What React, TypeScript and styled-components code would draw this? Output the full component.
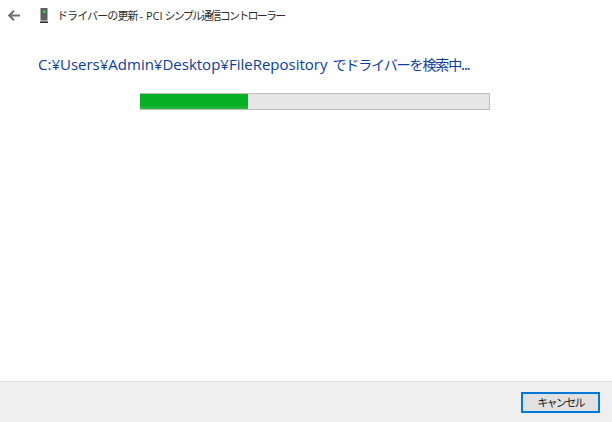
import * as React from "react";
import styled, { createGlobalStyle } from "styled-components";

const GlobalStyle = createGlobalStyle`
  html, body {
    margin: 0;
    padding: 0;
    background: #ffffff;
  }
  body {
    font-family: "Open Sans", "Noto Sans CJK JP", sans-serif;
  }
`;

const SWindow = styled.div`
  width: 612px;
  height: 422px;
  display: flex;
  flex-direction: column;
  overflow: hidden;
  background: #ffffff;
`;

const STitleBar = styled.div`
  height: 30px;
  display: flex;
  align-items: center;
  padding-left: 8px;
`;

const SBackIcon = styled.svg`
  width: 12px;
  height: 11px;
  margin-right: 20px;
`;

const SDeviceIcon = styled.svg`
  width: 8px;
  height: 15px;
  margin-right: 9px;
`;

const STitle = styled.span`
  font-family: "Noto Sans CJK JP", sans-serif;
  font-size: 11px;
  color: #2b2b2b;
  white-space: pre;
  margin-top: -1px;
`;

const STitleKana = styled.span<{ $spacing: number }>`
  letter-spacing: ${({ $spacing }) => $spacing}px;
`;

const STitleLatin = styled.span`
  font-family: "Open Sans", sans-serif;
  margin: 0 2px 0 2px;
`;

const SContent = styled.div`
  flex: 1;
  padding: 24px 0 0 38px;
  display: flex;
  flex-direction: column;
`;

const SHeading = styled.div`
  font-family: "Open Sans", sans-serif;
  font-size: 15px;
  line-height: 20px;
  color: #0a3ca4;
  white-space: nowrap;
`;

const SHeadingTail = styled.span`
  font-family: "Noto Sans CJK JP", sans-serif;
  font-size: 14px;
  letter-spacing: -1.1px;
  margin-left: 1px;
`;

const STrack = styled.div`
  box-sizing: border-box;
  width: 350px;
  height: 17px;
  margin: 19px 0 0 102px;
  background: #e6e6e6;
  border: 1px solid #bcbcbc;
  border-left: none;
`;

const SFill = styled.div`
  height: 100%;
  background: linear-gradient(to bottom, #06b025 0%, #06b025 75%, #2dbb47 100%);
`;

const SFooter = styled.div`
  box-sizing: border-box;
  height: 41px;
  display: flex;
  align-items: center;
  justify-content: flex-end;
  padding-right: 12px;
  background: #efefef;
  border-top: 1px solid #dfdfdf;
`;

const SButton = styled.button`
  box-sizing: border-box;
  width: 79px;
  height: 21px;
  padding: 0;
  font-family: "Noto Sans CJK JP", sans-serif;
  font-size: 11px;
  line-height: 15px;
  letter-spacing: -1.7px;
  color: #1a1a1a;
  background: #e1e1e1;
  border: 2px solid #0078d7;
`;

const App = () => {
  const progress = 108;

  return (
    <SWindow>
      <GlobalStyle />
      <STitleBar>
        <SBackIcon viewBox="0 0 12 11">
          <path d="M6 0.8 L1.2 5.5 L6 10.2 M1.2 5.5 H12" fill="none" stroke="#6f6f6f" strokeWidth="2" />
        </SBackIcon>
        <SDeviceIcon viewBox="0 0 8 15">
          <rect x="0.5" y="0" width="7" height="12" fill="#5f5f5f" />
          <rect x="0.5" y="12" width="7" height="1.5" fill="#a0a0a0" />
          <rect x="0" y="13.5" width="8" height="1.5" fill="#2f2f2f" />
          <rect x="3" y="2.5" width="2.5" height="2.5" fill="#22e04a" />
        </SDeviceIcon>
        <STitle>
          <STitleKana $spacing={-0.9}>ドライバーの更新</STitleKana>
          <STitleLatin>- PCI</STitleLatin>
          <STitleKana $spacing={-1.75}>シンプル通信コントローラー</STitleKana>
        </STitle>
      </STitleBar>
      <SContent>
        <SHeading>
          C:¥Users¥Admin¥Desktop¥FileRepository <SHeadingTail>でドライバーを検索中...</SHeadingTail>
        </SHeading>
        <STrack>
          <SFill style={{ width: progress }} />
        </STrack>
      </SContent>
      <SFooter>
        <SButton>キャンセル</SButton>
      </SFooter>
    </SWindow>
  );
};

export default App;
